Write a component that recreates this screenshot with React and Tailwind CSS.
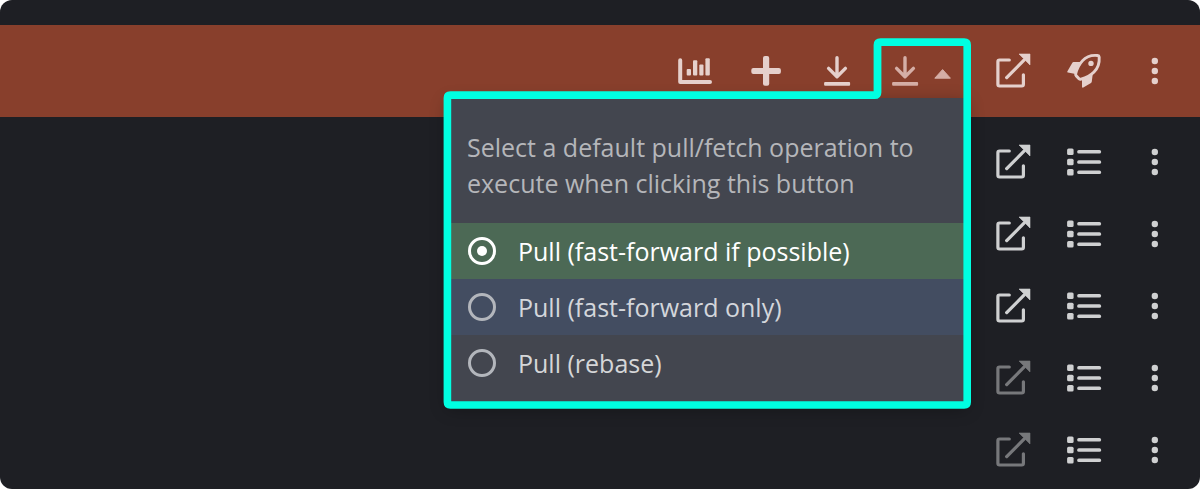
import React, { useState } from "react";

function Icon({ children, className = "" }) {
  return (
    <svg
      aria-hidden="true"
      viewBox="0 0 35 36"
      fill="currentColor"
      className={`h-9 w-[35px] shrink-0 ${className}`}
    >
      {children}
    </svg>
  );
}

function ChartIcon() {
  return (
    <Icon>
      <path
        d="M2.2 7.2V29H32"
        fill="none"
        stroke="currentColor"
        strokeWidth="4"
        strokeLinecap="round"
        strokeLinejoin="round"
      />
      <rect x="8.7" y="16" width="4.3" height="6.4" rx="1" />
      <rect x="15" y="7.3" width="4.3" height="15.1" rx="1" />
      <rect x="21.3" y="11.6" width="4.2" height="10.8" rx="1" />
      <rect x="27.4" y="5.2" width="4.4" height="17.2" rx="1" />
    </Icon>
  );
}

function PlusIcon() {
  return (
    <Icon>
      <rect x="2.3" y="14.9" width="29.6" height="6.2" rx="2" />
      <rect x="14" y="3.1" width="6.2" height="29.7" rx="2" />
    </Icon>
  );
}

function DownloadIcon() {
  return (
    <Icon>
      <path
        d="M17 4.8V23M8.600 15.400l8.400 8.400 8.400-8.400"
        fill="none"
        stroke="currentColor"
        strokeWidth="3.400"
        strokeLinecap="round"
        strokeLinejoin="round"
      />
      <rect x="4.1" y="29.1" width="26" height="3.600" rx="1" />
    </Icon>
  );
}

function OpenIcon() {
  return (
    <Icon>
      <path
        d="M13.3 7H3.6Q1.9 7 1.9 8.7V31.3Q1.9 33 3.6 33H25.7Q27.4 33 27.4 31.3V21.8"
        fill="none"
        stroke="currentColor"
        strokeWidth="3.2"
        strokeLinecap="round"
      />
      <path
        d="M10.7 24.6L28 7.2"
        fill="none"
        stroke="currentColor"
        strokeWidth="3.3"
        strokeLinecap="round"
      />
      <path d="M23 1H34V12z" stroke="currentColor" strokeWidth="0.6" strokeLinejoin="round" />
    </Icon>
  );
}

function RocketIcon() {
  return (
    <Icon>
      <path d="M14.500 9H6.600Q5.700 9 5.200 9.900L0.300 18.600Q0 19.400 0.900 19.500L8.600 21Z" />
      <path d="M15 26V33.800Q15.200 35 16.300 34.500L24 30Q24.800 29.500 24.800 28.600L25.800 20.500Z" />
      <path
        d="M30.500 2.500C24.500 1.900 19.300 3.500 15.600 7.600C12.200 11.300 9.800 16 8.700 20.800C8.500 21.700 8.700 22.300 9.300 22.900L12 25.700C12.600 26.300 13.200 26.500 14 26.200C19 24.700 23.600 22.400 27 19C31 15 32.600 9.800 32.200 4.100C32.100 3 31.600 2.600 30.500 2.500Z"
        fill="#883f2c"
        stroke="currentColor"
        strokeWidth="2.900"
        strokeLinejoin="round"
      />
      <circle cx="24" cy="10.400" r="2.700" />
    </Icon>
  );
}

function DotsIcon() {
  return (
    <Icon>
      <circle cx="16.8" cy="8" r="3.2" />
      <circle cx="16.8" cy="18" r="3.2" />
      <circle cx="16.8" cy="28" r="3.2" />
    </Icon>
  );
}

function ListIcon() {
  return (
    <Icon>
      {[7.7, 18, 28.3].map((y) => (
        <g key={y}>
          <rect x="0.1" y={y - 3.2} width="6.500" height="6.4" rx="1.5" />
          <rect x="10.2" y={y - 1.8} width="23.9" height="3.600" rx="1.6" />
        </g>
      ))}
    </Icon>
  );
}

function IconButton({ label, disabled = false, children }) {
  return (
    <button
      type="button"
      aria-label={label}
      disabled={disabled}
      className="flex w-[71px] shrink-0 items-center justify-center disabled:text-[#77787b]"
    >
      {children}
    </button>
  );
}

const options = [
  { id: "ff", label: "Pull (fast-forward if possible)", row: "bg-[#4c6955] text-white" },
  { id: "ff-only", label: "Pull (fast-forward only)", row: "bg-[#434d61] text-[#d3d6db]" },
  { id: "rebase", label: "Pull (rebase)", row: "text-[#d5d6d8]" },
];

function PullMenu() {
  const [selected, setSelected] = useState("ff");
  return (
    <fieldset className="absolute top-[73px] right-[11px] w-[520px] bg-[#43464f] pt-[31px] pb-[14px] text-[25px] leading-9 shadow-[0_4px_16px_rgba(0,0,0,0.3)]">
      <p className="px-5 pb-[22px] text-[#b5b6ba]">
        Select a default pull/fetch operation to execute when clicking this button
      </p>
      {options.map((o) => (
        <label key={o.id} className={`flex h-14 items-center gap-[22px] px-[21px] ${o.row}`}>
          <input
            type="radio"
            name="pull-operation"
            checked={selected === o.id}
            onChange={() => setSelected(o.id)}
            className="grid size-7 shrink-0 appearance-none place-content-center rounded-full border-[3px] border-[#b3b6bc] before:size-[10px] before:rounded-full checked:border-white checked:before:bg-white"
          />
          {o.label}
        </label>
      ))}
    </fieldset>
  );
}

function PullDropdown() {
  return (
    <div className="relative flex w-[105px] shrink-0">
      <button
        type="button"
        aria-label="Pull options"
        aria-expanded="true"
        className="flex items-center gap-[11px] pl-[15px] text-[#d5aea6]"
      >
        <DownloadIcon />
        <svg aria-hidden="true" viewBox="0 0 17 36" fill="currentColor" className="h-9 w-[17px]">
          <path
            d="M8.600 16.600L16.400 25.200H0.800Z"
            stroke="currentColor"
            strokeWidth="1"
            strokeLinejoin="round"
          />
        </svg>
      </button>
      <PullMenu />
      <svg
        aria-hidden="true"
        viewBox="0 0 528 371"
        className="pointer-events-none absolute top-[13px] right-[7px] h-[371px] w-[528px] max-w-none"
      >
        <path
          d="M437.600 0.200H521.200Q528 0.200 528 7V364Q528 370.800 521.200 370.800H7.400Q0.600 370.800 0.600 364V60Q0.600 53.300 7.400 53.300H430.600V7Q430.600 0.200 437.600 0.200ZM438.400 8V54.200Q438.400 61 431.600 61H8.200V363.200H520.400V8Z"
          fill="#00ffe1"
          fillRule="evenodd"
        />
      </svg>
    </div>
  );
}

const rows = [
  { id: 1, canOpen: true },
  { id: 2, canOpen: true },
  { id: 3, canOpen: true },
  { id: 4, canOpen: false },
  { id: 5, canOpen: false },
];

export default function App() {
  return (
    <div className="min-h-screen bg-white font-['Open_Sans',sans-serif]">
      <main className="min-h-screen rounded-xl bg-[#1e1f24] pt-[25px]">
        <header className="relative z-10 flex h-[92px] justify-end bg-[#883f2c] pr-[9px] text-[#e5d0cc]">
          <IconButton label="Statistics"><ChartIcon /></IconButton>
          <IconButton label="Add"><PlusIcon /></IconButton>
          <IconButton label="Fetch"><DownloadIcon /></IconButton>
          <PullDropdown />
          <IconButton label="Open"><OpenIcon /></IconButton>
          <IconButton label="Launch"><RocketIcon /></IconButton>
          <IconButton label="More"><DotsIcon /></IconButton>
        </header>
        <ul className="pt-[9px] pr-[9px] text-[#cfd0d1]">
          {rows.map((r) => (
            <li key={r.id} className="flex h-[72px] justify-end">
              <IconButton label="Open" disabled={!r.canOpen}><OpenIcon /></IconButton>
              <IconButton label="Details"><ListIcon /></IconButton>
              <IconButton label="More"><DotsIcon /></IconButton>
            </li>
          ))}
        </ul>
      </main>
    </div>
  );
}
